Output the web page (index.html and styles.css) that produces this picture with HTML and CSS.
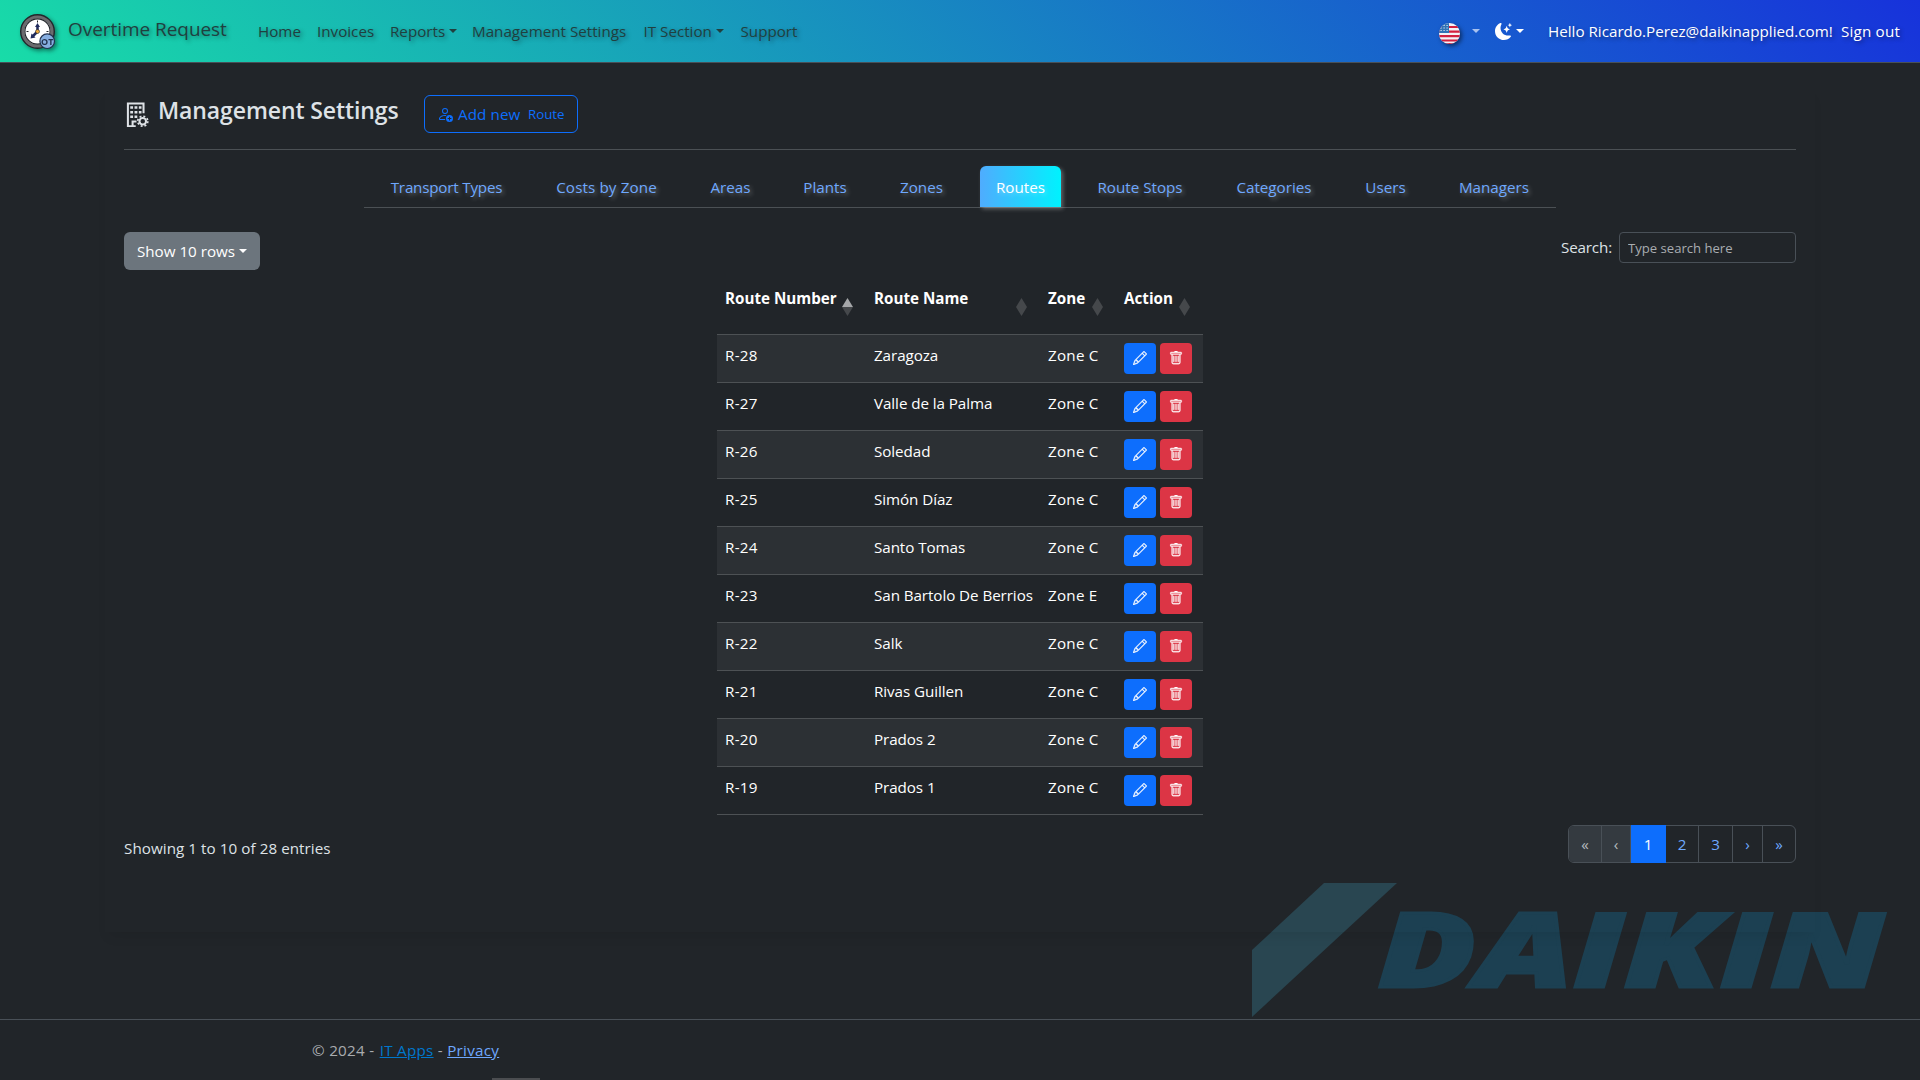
FILE: index.html
```html
<!DOCTYPE html>
<html lang="en">
<head>
<meta charset="utf-8">
<title>Management Settings - Overtime Request</title>
<link rel="stylesheet" href="styles.css">
</head>
<body>
<svg class="sprite" aria-hidden="true">
  <symbol id="pencil" viewBox="0 0 16 16"><path d="M12.146.146a.5.5 0 0 1 .708 0l3 3a.5.5 0 0 1 0 .708l-10 10a.5.5 0 0 1-.168.11l-5 2a.5.5 0 0 1-.65-.65l2-5a.5.5 0 0 1 .11-.168zM11.207 2.5 13.5 4.793 14.793 3.5 12.5 1.207zm1.586 3L10.5 3.207 4 9.707V10h.5a.5.5 0 0 1 .5.5v.5h.5a.5.5 0 0 1 .5.5v.5h.293zm-9.761 5.175-.106.106-1.528 3.821 3.821-1.528.106-.106A.5.5 0 0 1 5 12.5V12h-.5a.5.5 0 0 1-.5-.5V11h-.5a.5.5 0 0 1-.468-.325"/></symbol>
  <symbol id="trash" viewBox="0 0 16 16"><path d="M5.5 5.5A.5.5 0 0 1 6 6v6a.5.5 0 0 1-1 0V6a.5.5 0 0 1 .5-.5m2.5 0a.5.5 0 0 1 .5.5v6a.5.5 0 0 1-1 0V6a.5.5 0 0 1 .5-.5m3 .5a.5.5 0 0 0-1 0v6a.5.5 0 0 0 1 0z"/><path d="M14.5 3a1 1 0 0 1-1 1H13v9a2 2 0 0 1-2 2H5a2 2 0 0 1-2-2V4h-.5a1 1 0 0 1-1-1V2a1 1 0 0 1 1-1H6a1 1 0 0 1 1-1h2a1 1 0 0 1 1 1h3.5a1 1 0 0 1 1 1zM4.118 4 4 4.059V13a1 1 0 0 0 1 1h6a1 1 0 0 0 1-1V4.059L11.882 4zM2.5 3h11V2h-11z"/></symbol>
</svg>

<header class="navbar">
  <svg class="brand-logo" viewBox="0 0 36 36">
    <circle cx="17.5" cy="17.5" r="16" fill="#fff" stroke="#22262b" stroke-width="3"/>
    <circle cx="17.5" cy="17.5" r="14.6" fill="none" stroke="#6b6b6e" stroke-width="3"/>
    <circle cx="17.5" cy="17.5" r="12.6" fill="#fff" stroke="#22262b" stroke-width="1.2"/>
    <path d="M17.5 6.5v2M6.5 17.5h2M26.5 17.5h2" stroke="#22262b" stroke-width="1"/>
    <path d="M17.5 17.5V12M17.5 17.5L12.5 22.5" stroke="#1f2a5c" stroke-width="2.5"/>
    <path d="M17.5 9l2.5 4h-5zM10.5 24.5l1-5 4 4z" fill="#1f2a5c"/>
    <circle cx="17.5" cy="17.5" r="2" fill="#e9a63a" stroke="#22262b" stroke-width=".6"/>
    <circle cx="27.2" cy="27.2" r="7.3" fill="#86aee0" stroke="#22324f" stroke-width="1.2"/>
    <text x="27.2" y="30.7" class="brand-badge">OT</text>
  </svg>
  <a class="brand">Overtime Request</a>
  <nav class="nav">
    <a class="w-home">Home</a>
    <a class="w-inv">Invoices</a>
    <a class="w-rep">Reports<i class="caret"></i></a>
    <a class="w-mgmt">Management Settings</a>
    <a class="w-it">IT Section<i class="caret"></i></a>
    <a>Support</a>
  </nav>
  <div class="nav-end">
    <svg class="flag" viewBox="0 0 21 21">
      <clipPath id="round"><circle cx="10.5" cy="10.5" r="10.5"/></clipPath>
      <g clip-path="url(#round)">
        <rect width="21" height="21" fill="#f4f2f6"/>
        <path d="M0 4h21M0 8.700h21M0 13.200h21M0 17.500h21M0 21h21" stroke="#d2203f" stroke-width="2.2"/>
        <rect width="10" height="10" fill="#3173b5"/>
        <path d="M1.500 2.500h8M1.500 5h8M1.500 7.500h8" stroke="#dfeaf5" stroke-width="1.2" stroke-dasharray="1.2 1.8"/>
      </g>
    </svg>
    <i class="caret dim"></i>
    <svg class="moon" viewBox="0 0 16 16"><path d="M6 .278a.77.77 0 0 1 .08.858 7.2 7.2 0 0 0-.878 3.46c0 4.021 3.278 7.277 7.318 7.277q.792-.001 1.533-.16a.79.79 0 0 1 .81.316.73.73 0 0 1-.031.893A8.35 8.35 0 0 1 8.344 16C3.734 16 0 12.286 0 7.71 0 4.266 2.114 1.312 5.124.06A.75.75 0 0 1 6 .278"/><path d="M10.794 3.148a.217.217 0 0 1 .412 0l.387 1.162c.173.518.579.924 1.097 1.097l1.162.387a.217.217 0 0 1 0 .412l-1.162.387a1.73 1.73 0 0 0-1.097 1.097l-.387 1.162a.217.217 0 0 1-.412 0l-.387-1.162A1.73 1.73 0 0 0 9.31 6.593l-1.162-.387a.217.217 0 0 1 0-.412l1.162-.387a1.73 1.73 0 0 0 1.097-1.097zM13.863.099a.145.145 0 0 1 .274 0l.258.774c.115.346.386.617.732.732l.774.258a.145.145 0 0 1 0 .274l-.774.258a1.16 1.16 0 0 0-.732.732l-.258.774a.145.145 0 0 1-.274 0l-.258-.774a1.16 1.16 0 0 0-.732-.732l-.774-.258a.145.145 0 0 1 0-.274l.774-.258c.346-.115.617-.386.732-.732z"/></svg>
    <i class="caret light"></i>
    <a class="hello">Hello Ricardo.Perez@daikinapplied.com!</a>
    <a class="signout">Sign out</a>
  </div>
</header>

<main class="card">
  <div class="title-row">
    <svg class="building" viewBox="0 0 16 16">
      <path d="M7.500 15.500H2.500V.9H12.500V7.200M5.500 15.500V12.500H8" stroke-width="1.3"/>
      <path d="M4 3.500h7.200M4 6.500h7.200M4 9.500h4.500" stroke-width="1.6" stroke-dasharray="1.8 .95"/>
      <circle cx="12" cy="12.3" r="2.1" stroke-width="1.3"/>
      <circle cx="12" cy="12.3" r="3.2" stroke-width="1.1" stroke-dasharray="1.26 1.253"/>
    </svg>
    <h1>Management Settings</h1>
    <a class="add-btn">
      <svg viewBox="0 0 16 16"><path d="M12.500 16a3.500 3.500 0 1 0 0-7 3.500 3.500 0 0 0 0 7m.5-5v1h1a.5.5 0 0 1 0 1h-1v1a.5.5 0 0 1-1 0v-1h-1a.5.5 0 0 1 0-1h1v-1a.5.5 0 0 1 1 0m-2-6a3 3 0 1 1-6 0 3 3 0 0 1 6 0M8 7a2 2 0 1 0 0-4 2 2 0 0 0 0 4"/><path d="M8.256 14a4.500 4.500 0 0 1-.229-1.004H3c.001-.246.154-.986.832-1.664C4.484 10.680 5.711 10 8 10q.39 0 .74.025c.226-.341.496-.65.804-.918Q8.844 9.002 8 9c-5 0-6 3-6 4s1 1 1 1z"/></svg>
      <span class="add-text">Add new</span><span class="add-kind">Route</span>
    </a>
  </div>
  <ul class="tabs">
    <li class="t1">Transport Types</li>
    <li class="t2">Costs by Zone</li>
    <li class="t3">Areas</li>
    <li class="t4">Plants</li>
    <li class="t5">Zones</li>
    <li class="t6 active">Routes</li>
    <li class="t7">Route Stops</li>
    <li class="t8">Categories</li>
    <li class="t9">Users</li>
    <li class="t10">Managers</li>
  </ul>
  <div class="tools">
    <button class="rows-btn">Show 10 rows<i class="caret"></i></button>
    <label class="search"><span>Search:</span><input type="text" placeholder="Type search here"></label>
  </div>
  <table class="routes">
    <colgroup><col class="c1"><col class="c2"><col class="c3"><col class="c4"></colgroup>
    <thead>
      <tr>
        <th><div>Route Number<i class="sort asc"></i></div></th>
        <th><div>Route Name<i class="sort"></i></div></th>
        <th><div>Zone<i class="sort"></i></div></th>
        <th><div class="last">Action<i class="sort"></i></div></th>
      </tr>
    </thead>
    <tbody>
      <tr><td>R-28</td><td>Zaragoza</td><td>Zone C</td><td><div class="acts"><b class="edit"><svg><use href="#pencil"/></svg></b><b class="del"><svg><use href="#trash"/></svg></b></div></td></tr>
      <tr><td>R-27</td><td>Valle de la Palma</td><td>Zone C</td><td><div class="acts"><b class="edit"><svg><use href="#pencil"/></svg></b><b class="del"><svg><use href="#trash"/></svg></b></div></td></tr>
      <tr><td>R-26</td><td>Soledad</td><td>Zone C</td><td><div class="acts"><b class="edit"><svg><use href="#pencil"/></svg></b><b class="del"><svg><use href="#trash"/></svg></b></div></td></tr>
      <tr><td>R-25</td><td>Simón Díaz</td><td>Zone C</td><td><div class="acts"><b class="edit"><svg><use href="#pencil"/></svg></b><b class="del"><svg><use href="#trash"/></svg></b></div></td></tr>
      <tr><td>R-24</td><td>Santo Tomas</td><td>Zone C</td><td><div class="acts"><b class="edit"><svg><use href="#pencil"/></svg></b><b class="del"><svg><use href="#trash"/></svg></b></div></td></tr>
      <tr><td>R-23</td><td>San Bartolo De Berrios</td><td>Zone E</td><td><div class="acts"><b class="edit"><svg><use href="#pencil"/></svg></b><b class="del"><svg><use href="#trash"/></svg></b></div></td></tr>
      <tr><td>R-22</td><td>Salk</td><td>Zone C</td><td><div class="acts"><b class="edit"><svg><use href="#pencil"/></svg></b><b class="del"><svg><use href="#trash"/></svg></b></div></td></tr>
      <tr><td>R-21</td><td>Rivas Guillen</td><td>Zone C</td><td><div class="acts"><b class="edit"><svg><use href="#pencil"/></svg></b><b class="del"><svg><use href="#trash"/></svg></b></div></td></tr>
      <tr><td>R-20</td><td>Prados 2</td><td>Zone C</td><td><div class="acts"><b class="edit"><svg><use href="#pencil"/></svg></b><b class="del"><svg><use href="#trash"/></svg></b></div></td></tr>
      <tr><td>R-19</td><td>Prados 1</td><td>Zone C</td><td><div class="acts"><b class="edit"><svg><use href="#pencil"/></svg></b><b class="del"><svg><use href="#trash"/></svg></b></div></td></tr>
    </tbody>
  </table>
  <div class="summary">
    <span class="info">Showing 1 to 10 of 28 entries</span>
    <div class="pager">
      <span class="p1 off">«</span><span class="p2 off">‹</span><span class="p3 on">1</span><span class="p4">2</span><span class="p5">3</span><span class="p6">›</span><span class="p7">»</span>
    </div>
  </div>
</main>

<svg class="watermark" viewBox="0 0 640 136">
  <path d="M72 0H145L0 134V67z" fill="#294651"/>
  <text x="126" y="103.5" textLength="506" lengthAdjust="spacingAndGlyphs">DAIKIN</text>
</svg>

<footer class="footer">
  <p>© 2024 - <a class="it">IT Apps</a> - <a class="privacy">Privacy</a></p>
</footer>
<div class="handle"></div>
</body>
</html>
```
FILE: styles.css
```css
* { box-sizing: border-box; }
html, body { height: 100%; }
body {
  margin: 0;
  display: flex;
  flex-direction: column;
  overflow: hidden;
  background: #212529;
  color: #dee2e6;
  font: 15.2px/24px "Open Sans", "Noto Sans", sans-serif;
}
svg { fill: currentColor; flex: none; }
.sprite { display: none; }

.caret {
  flex: none;
  display: inline-block;
  margin-left: 4px;
  vertical-align: 4px;
  border: 4.4px solid transparent;
  border-top-color: currentColor;
  border-bottom: 0;
}

/* top bar */
.navbar {
  flex: none;
  display: flex;
  align-items: flex-start;
  height: 63px;
  padding: 0 20px;
  border-bottom: 1px solid #495057;
  background: linear-gradient(45deg, #18dca8, #1732db);
  text-shadow: 2px 2px 4px rgba(0, 0, 0, .4);
  white-space: nowrap;
}
.brand-logo { width: 36px; height: 36px; margin-top: 14px; filter: drop-shadow(2px 2px 2px rgba(0, 0, 0, .45)); }
.brand-badge { font: 700 9px "Open Sans", sans-serif; text-anchor: middle; fill: #22324f; text-shadow: none; }
.brand { width: 190px; padding: 14px 0 0 12px; font-size: 19px; line-height: 30px; letter-spacing: -.05px; color: #20403f; }
.nav { display: flex; padding: 19px 0 0 12px; color: #20403f; }
.w-home { width: 59px; }
.w-inv { width: 73px; }
.w-rep { width: 82px; }
.w-mgmt { width: 171.5px; }
.w-it { width: 97px; }
.nav-end { margin-left: auto; display: flex; width: 461px; color: #fff; }
.nav-end .caret { margin: 29px 0 0 0; }
.flag { width: 21px; height: 21px; margin-top: 23px; filter: drop-shadow(2px 2px 2px rgba(0, 0, 0, .5)); }
.nav-end .dim { margin-left: 12px; color: #a9c2ef; }
.moon { width: 17px; height: 17px; margin: 23px 0 0 15px; }
.nav-end .light { margin-left: 4px; }
.hello { width: 293px; margin: 19px 0 0 24px; }
.signout { margin-top: 19px; letter-spacing: .18px; }

/* main panel */
.card {
  flex: none;
  width: 1710px;
  height: 844px;
  margin: 25px auto 0;
  padding: 7px 19px 0;
  box-shadow: 0 8px 12px -4px rgba(0, 0, 0, .08);
}
.title-row { display: flex; height: 55px; border-bottom: 1px solid #4b5054; }
.building { width: 25px; height: 25px; margin-top: 7px; fill: none; stroke: currentColor; }
h1 { width: 267px; margin: 0; padding: 0 0 0 9px; font-size: 23px; line-height: 31px; font-weight: 600; letter-spacing: -.1px; white-space: nowrap; }
.add-btn {
  display: flex;
  width: 154px;
  height: 38px;
  margin-left: 8px;
  padding: 6px 0 0 12px;
  border: 1px solid #0d6efd;
  border-radius: 6px;
  color: #0d6efd;
}
.add-btn svg { width: 16px; height: 16px; margin-top: 4px; }
.add-text { width: 70px; margin-left: 5px; letter-spacing: .1px; }
.add-kind { font-size: 13.3px; }

.tabs {
  display: flex;
  list-style: none;
  width: 1192px;
  height: 58px;
  margin: 0 auto;
  padding: 16px 0 0 10px;
  border-bottom: 1px solid #4b5054;
  color: #6ea8fe;
  text-shadow: 2px 2px 4px rgba(255, 255, 255, .3);
  white-space: nowrap;
}
.tabs li { flex: none; height: 41px; padding-top: 9px; text-align: center; margin-right: 20px; }
.tabs .t1 { width: 145px; letter-spacing: -.2px; }
.tabs .t2 { width: 135px; letter-spacing: .12px; }
.t3 { width: 73px; }
.t4 { width: 76px; }
.t5 { width: 77px; }
.t6 { width: 81px; }
.t7 { width: 118px; }
.t8 { width: 110px; }
.t9 { width: 73px; }
.tabs .t10 { width: 104px; margin-right: 0; }
.tabs .active {
  color: #fff;
  border-radius: 6px 6px 0 0;
  background: linear-gradient(90deg, #4facfe, #00f2fe);
  box-shadow: 2px 2px 4px rgba(255, 255, 255, .3);
}

.tools { display: flex; justify-content: space-between; padding-top: 24px; height: 72px; }
.rows-btn {
  width: 136px;
  height: 38px;
  padding: 0 0 1px;
  border: 0;
  border-radius: 6px;
  background: #6c757d;
  color: #fff;
  font: inherit;
  white-space: nowrap;
}
.search { display: flex; gap: 7px; }
.search span { padding-top: 3px; letter-spacing: -.15px; }
.search input {
  width: 177px;
  height: 31px;
  padding: 0 8px;
  border: 1px solid #495057;
  border-radius: 4px;
  background: #212529;
  font: 13.1px "Open Sans", sans-serif;
}
.search input::placeholder { color: #a9adb1; }

/* routes table */
.routes { width: 486px; margin: 0 auto; border-collapse: separate; border-spacing: 0; table-layout: fixed; color: #fff; white-space: nowrap; }
.c1 { width: 149px; }
.c2 { width: 174px; }
.c3 { width: 76px; }
.c4 { width: 87px; }
th { height: 55px; padding: 6px 8px 0; text-align: left; vertical-align: top; border-bottom: 1px solid #4d5154; }
th div { display: flex; justify-content: space-between; margin-right: 5px; }
th .last { margin-right: 5px; }
td { height: 48px; padding: 8px; vertical-align: top; border-bottom: 1px solid #4d5154; }
td:nth-child(1) { letter-spacing: .3px; }
td:nth-child(2) { letter-spacing: -.07px; }
td:nth-child(3) { letter-spacing: .25px; }
tbody tr:nth-child(odd) td { background: #2c3034; }
.sort { width: 11px; height: 18px; margin-top: 12px; display: grid; }
.sort::before, .sort::after { content: ""; background: #45484b; }
.sort::before { clip-path: polygon(50% 0, 100% 100%, 0 100%); }
.sort::after { clip-path: polygon(0 0, 100% 0, 50% 100%); }
.sort.asc::before { background: #a5a7a9; }
.acts { display: flex; gap: 4px; }
.acts b { display: flex; align-items: center; justify-content: center; width: 32px; height: 31px; padding-bottom: 1px; border-radius: 4px; }
.acts svg { width: 14px; height: 14px; stroke: currentColor; stroke-width: .35px; }
.edit { background: #0d6efd; }
.del { background: #dc3545; }

.summary { display: flex; justify-content: space-between; padding-top: 10px; }
.info { padding-top: 11px; letter-spacing: .06px; }
.pager { display: flex; height: 38px; border: 1px solid #495057; border-radius: 6px; color: #6ea8fe; }
.pager span { display: flex; align-items: center; justify-content: center; padding-bottom: 1px; border-right: 1px solid #495057; }
.pager .p7 { border-right: 0; }
.p1 { width: 33px; border-radius: 5px 0 0 5px; }
.p2 { width: 29px; }
.p3 { width: 35px; }
.p4 { width: 33px; }
.p5 { width: 34px; }
.p6 { width: 30px; }
.p7 { width: 32px; }
.pager .off { background: #343a40; color: #b5babf; }
.pager .on { margin: -1px 0; background: #0d6efd; color: #fff; border-color: #0d6efd; }

/* company mark behind the page corner */
.watermark { position: absolute; left: 1252px; top: 883px; width: 640px; height: 136px; z-index: -1; overflow: visible; }
.watermark text { font: italic 800 102px/1 "Open Sans", sans-serif; fill: #1c4052; stroke: #1c4052; stroke-width: 3px; }

.footer { flex: none; margin-top: 87px; border-top: 1px solid #495057; color: #a9acaf; }
.footer p { margin: 0; padding: 18px 0 0 312px; letter-spacing: .28px; }
.footer a { text-decoration: underline; }
.it { margin-left: 1px; color: #0077cc; }
.privacy { color: #6ea8fe; }
.handle { position: absolute; left: 492px; top: 1078px; width: 48px; height: 2px; background: #4b4d50; }
```
